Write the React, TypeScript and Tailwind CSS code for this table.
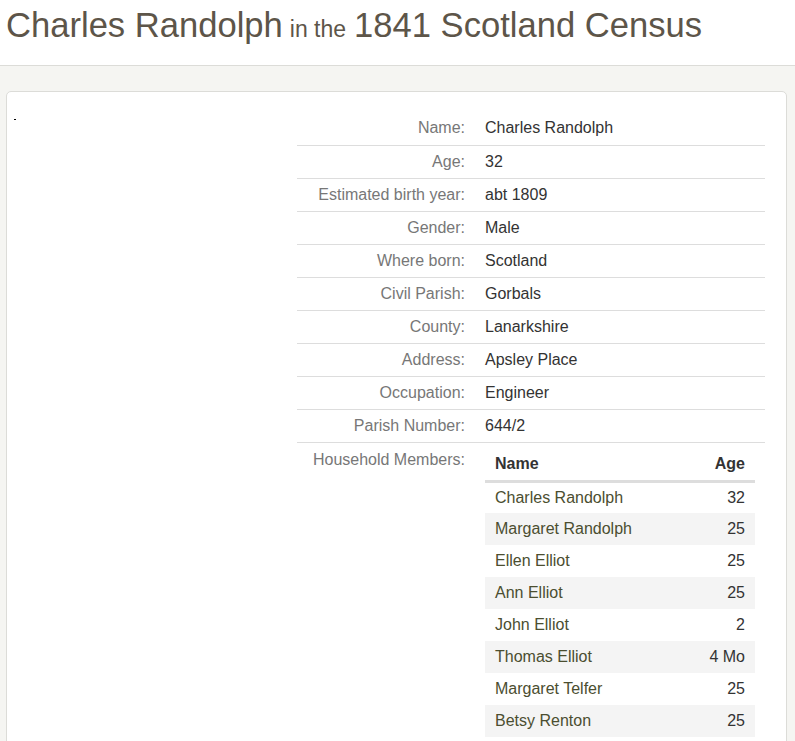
import React from 'react';

const facts: [string, string][] = [
  ['Name:', 'Charles Randolph'],
  ['Age:', '32'],
  ['Estimated birth year:', 'abt 1809'],
  ['Gender:', 'Male'],
  ['Where born:', 'Scotland'],
  ['Civil Parish:', 'Gorbals'],
  ['County:', 'Lanarkshire'],
  ['Address:', 'Apsley Place'],
  ['Occupation:', 'Engineer'],
  ['Parish Number:', '644/2'],
];

const members: [string, string][] = [
  ['Charles Randolph', '32'],
  ['Margaret Randolph', '25'],
  ['Ellen Elliot', '25'],
  ['Ann Elliot', '25'],
  ['John Elliot', '2'],
  ['Thomas Elliot', '4 Mo'],
  ['Margaret Telfer', '25'],
  ['Betsy Renton', '25'],
];

const App: React.FC = () => {
  return (
    <div className="min-h-screen bg-[#f5f5f2] font-['Liberation_Sans',Arial,sans-serif]">
      <header className="h-[66px] bg-white border-b border-[#dcdcd8] px-[6px] pt-[1px]">
        <h1 className="text-[#5d5549] text-[34.6px] leading-[48px] font-normal">
          Charles Randolph<span className="text-[23px] ml-[7px] mr-[8px]">in the</span>1841 Scotland Census
        </h1>
      </header>

      <div className="ml-[6px] mr-[8px] mt-[25px] bg-white border border-[#dcdcd8] rounded-[5px] min-h-[700px] flex">
        <div className="w-[290px] pl-[7px] pt-[27px]">
          <div className="w-[2px] h-[1px] bg-black" />
        </div>

        <table className="mt-[20px] w-[468px] self-start border-collapse text-[16px] leading-[18px]">
          <tbody>
            {facts.map(([label, value], i) => (
              <tr key={label} className={i > 0 ? 'border-t border-[#dddddd]' : ''}>
                <td className="w-[178px] pr-[10px] h-[33px] text-right text-[#777777] align-middle">{label}</td>
                <td className="pl-[10px] text-[#333333] align-middle">{value}</td>
              </tr>
            ))}
            <tr className="border-t border-[#dddddd]">
              <td className="pr-[10px] pt-[8px] text-right text-[#777777] align-top">Household Members:</td>
              <td className="pl-[10px] pr-[10px] pt-[8px] align-top">
                <table className="w-full border-collapse">
                  <thead>
                    <tr className="border-b-[3px] border-[#dddddd]">
                      <th className="px-[10px] pt-[4px] pb-[7px] text-left font-bold text-[#333333]">Name</th>
                      <th className="px-[10px] pt-[4px] pb-[7px] text-right font-bold text-[#333333]">Age</th>
                    </tr>
                  </thead>
                  <tbody>
                    {members.map(([name, age], i) => (
                      <tr key={name} className={i % 2 === 1 ? 'bg-[#f4f4f4]' : ''}>
                        <td className="px-[10px] h-[32px] text-[#4b4e30]">{name}</td>
                        <td className="px-[10px] text-right text-[#333333]">{age}</td>
                      </tr>
                    ))}
                  </tbody>
                </table>
              </td>
            </tr>
          </tbody>
        </table>
      </div>
    </div>
  );
};

export default App;
